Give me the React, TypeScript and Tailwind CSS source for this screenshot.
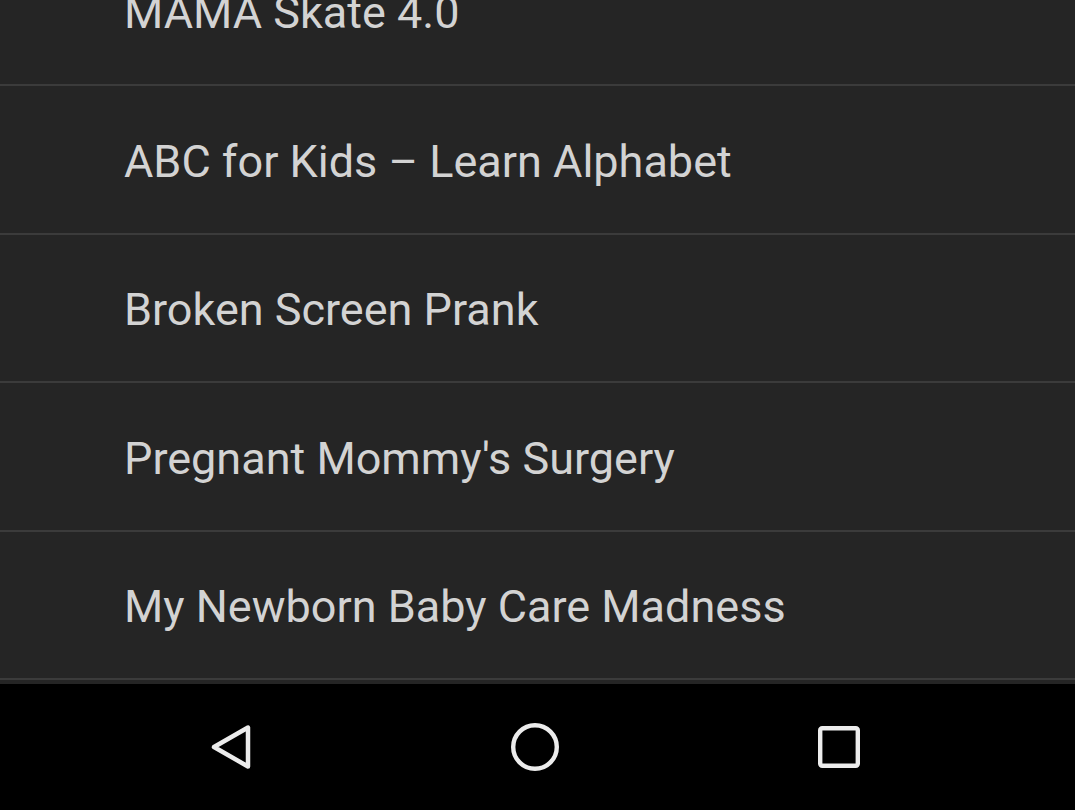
import React from "react";

const items = [
  "MAMA Skate 4.0",
  "ABC for Kids – Learn Alphabet",
  "Broken Screen Prank",
  "Pregnant Mommy's Surgery",
  "My Newborn Baby Care Madness",
];

export default function App() {
  return (
    <div
      className="w-[1075px] h-[810px] flex flex-col overflow-hidden bg-[#252525]"
      style={{ fontFamily: "Roboto, 'Noto Sans', sans-serif" }}
    >
      <div className="h-[684px] overflow-hidden">
        <div className="mt-[-62.5px] flex flex-col">
          {items.map((t) => (
            <div
              key={t}
              className="h-[148.5px] box-border border-b-2 border-[#3b3b3b] flex items-center pl-[124px] pt-[4px]"
            >
              <span className="text-[45px] leading-none text-[#d3d3d3]">
                {t}
              </span>
            </div>
          ))}
        </div>
      </div>
      <div className="h-[126px] bg-black flex items-center pl-[207px] gap-[256px]">
        <svg width="48" height="48" viewBox="0 0 48 48" fill="none">
          <polygon
            points="7,24 41,4.5 41,43.5"
            stroke="#ececec"
            strokeWidth="4.5"
            strokeLinejoin="round"
          />
        </svg>
        <svg width="48" height="48" viewBox="0 0 48 48" fill="none">
          <circle cx="24" cy="24" r="21.8" stroke="#ececec" strokeWidth="4.4" />
        </svg>
        <svg width="48" height="48" viewBox="0 0 48 48" fill="none">
          <rect x="5.2" y="5.2" width="37.6" height="37.6" rx="2" stroke="#ececec" strokeWidth="4.4" />
        </svg>
      </div>
    </div>
  );
}
